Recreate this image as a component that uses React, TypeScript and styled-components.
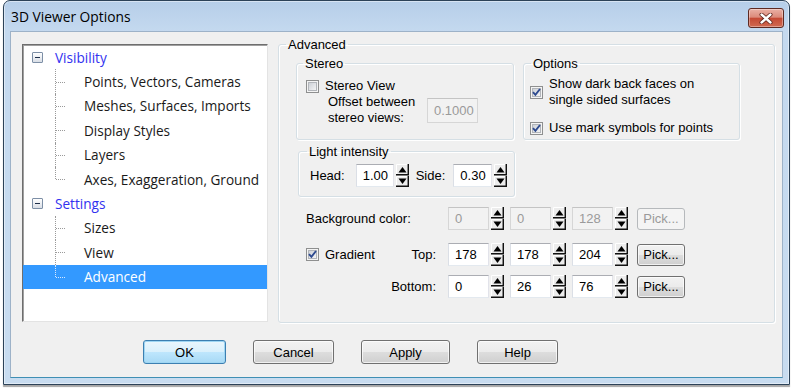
import React from "react";
import styled, { createGlobalStyle } from "styled-components";

const SANS = `"Liberation Sans", Arial, sans-serif`;
const UI = `"Open Sans", "Segoe UI", sans-serif`;

const GlobalStyle = createGlobalStyle`
  html, body {
    margin: 0;
    padding: 0;
    background: #ffffff;
  }
  body {
    width: 794px;
    height: 388px;
    overflow: hidden;
  }
`;

const Screen = styled.div`
  width: 794px;
  height: 388px;
  padding-left: 3px;
  box-sizing: border-box;
`;

const Window = styled.div`
  width: 787px;
  height: 385px;
  box-sizing: border-box;
  display: flex;
  flex-direction: column;
  border: 1px solid #2c4258;
  border-radius: 7px 7px 0 0;
  background: linear-gradient(#b6cee9 0px, #c4d9ef 30px, #c8dcf0 100%);
  box-shadow: inset 0 0 0 1px rgba(255, 255, 255, 0.45), 0 2px 1px rgba(0, 0, 0, 0.35);
`;

const TitleBar = styled.div`
  height: 30px;
  flex-shrink: 0;
  display: flex;
  align-items: center;
  padding-left: 7px;
  font-family: ${UI};
  font-size: 13.8px;
  color: #000;
`;

const CloseButton = styled.div`
  width: 36px;
  height: 20px;
  box-sizing: border-box;
  margin: 7px 5px 0 auto;
  align-self: flex-start;
  display: flex;
  align-items: center;
  justify-content: center;
  border: 1px solid #5e2a22;
  border-radius: 3px;
  background: linear-gradient(#eab0a5 0%, #dc8b7b 45%, #c54a35 52%, #d06a51 100%);
  box-shadow: inset 0 0 0 1px rgba(255, 255, 255, 0.35);
`;

const Client = styled.div`
  flex: 1;
  margin: 0 6px 6px;
  background: #f0f0f0;
  border: 1px solid #9db2c8;
  border-bottom-color: #3f8fb4;
  display: flex;
  flex-direction: column;
`;

const TopRow = styled.div`
  display: flex;
  align-items: flex-start;
  padding: 5px 0 0 11px;
`;

/* ---------- tree ---------- */

const Tree = styled.div`
  width: 246px;
  height: 278px;
  margin-top: 7px;
  box-sizing: border-box;
  background: #fff;
  border: 1px solid;
  border-color: #6e6e6e #e3e3e3 #e3e3e3 #6e6e6e;
  box-shadow: inset 1px 1px 0 #a0a0a0;
  font-family: ${UI};
  font-size: 13.6px;
`;

const TreeRow = styled.div<{ $selected?: boolean; $parent?: boolean }>`
  height: 24.4px;
  display: flex;
  align-items: center;
  padding-left: ${(p) => (p.$parent ? 9 : 32)}px;
  background: ${(p) => (p.$selected ? "#3399ff" : "transparent")};
  color: ${(p) => (p.$selected ? "#fff" : p.$parent ? "#3232f0" : "#1a1a1a")};
  white-space: nowrap;
`;

const Expander = styled.span`
  width: 11px;
  height: 11px;
  box-sizing: border-box;
  margin-right: 12px;
  border: 1px solid #7d8fa6;
  border-radius: 1px;
  background: linear-gradient(#ffffff, #d9dee6);
  display: flex;
  align-items: center;
  justify-content: center;
  &::after {
    content: "";
    width: 5px;
    height: 1px;
    background: #1e2f4a;
  }
`;

const Connector = styled.span<{ $last?: boolean; $selected?: boolean }>`
  width: 10px;
  align-self: stretch;
  position: relative;
  margin-right: 19px;
  &::before {
    content: "";
    position: absolute;
    left: 0;
    top: 0;
    height: ${(p) => (p.$last ? "50%" : "100%")};
    border-left: 1px dotted ${(p) => (p.$selected ? "#d6e8ff" : "#9a9a9a")};
  }
  &::after {
    content: "";
    position: absolute;
    left: 1px;
    top: 50%;
    width: 9px;
    border-top: 1px dotted ${(p) => (p.$selected ? "#d6e8ff" : "#9a9a9a")};
  }
`;

/* ---------- group boxes ---------- */

const Group = styled.fieldset<{ $w: number; $h: number; $ml?: number; $mt?: number }>`
  margin: ${(p) => p.$mt ?? 0}px 0 0 ${(p) => p.$ml ?? 0}px;
  padding: 0;
  min-width: 0;
  width: ${(p) => p.$w}px;
  height: ${(p) => p.$h}px;
  box-sizing: border-box;
  border: 1px solid #d5dfe5;
  border-radius: 3px;
  box-shadow: inset 1px 1px 0 #fff, 1px 1px 0 #fff;
  font-family: ${SANS};
  font-size: 13px;
  color: #000;
`;

const Legend = styled.legend<{ $ml?: number }>`
  margin-left: ${(p) => p.$ml ?? 7}px;
  padding: 0 2px;
  line-height: 15px;
  font-family: ${SANS};
  font-size: 13px;
`;

const AdvancedBody = styled.div`
  padding: 4px 0 0 17px;
`;

const GroupRow = styled.div`
  display: flex;
`;

const StereoBody = styled.div`
  padding: 7px 0 0 9px;
`;

const OptionsBody = styled.div`
  padding: 5px 0 0 6px;
`;

const CheckRow = styled.label<{ $mt?: number }>`
  display: flex;
  align-items: center;
  gap: 6px;
  margin-top: ${(p) => p.$mt ?? 0}px;
  line-height: 16px;
`;

const OffsetRow = styled.div`
  display: flex;
  align-items: center;
  margin-top: 0;
  padding-left: 22px;
`;

const OffsetLabel = styled.div`
  width: 99px;
  line-height: 16px;
`;

const TextBox = styled.div<{ $w: number; $h?: number; $disabled?: boolean }>`
  width: ${(p) => p.$w}px;
  height: ${(p) => p.$h ?? 23}px;
  box-sizing: border-box;
  display: flex;
  align-items: center;
  padding-left: 6px;
  border: 1px solid;
  border-color: ${(p) =>
    p.$disabled ? "#c4c4c4 #d6d6d6 #d6d6d6 #d6d6d6" : "#abadb3 #e2e3ea #e3e9ef #dbdfe6"};
  background: ${(p) => (p.$disabled ? "#f2f2f2" : "#fff")};
  color: ${(p) => (p.$disabled ? "#9a9a9a" : "#000")};
  font-family: ${SANS};
  font-size: 13px;
`;

const LightBody = styled.div`
  display: flex;
  align-items: center;
  padding: 5px 0 0 11px;
`;

const Caption = styled.span<{ $ml?: number; $mr?: number }>`
  margin-left: ${(p) => p.$ml ?? 0}px;
  margin-right: ${(p) => p.$mr ?? 0}px;
`;

const SpinWrap = styled.div<{ $mr?: number }>`
  display: flex;
  align-items: center;
  gap: 2px;
  margin-right: ${(p) => p.$mr ?? 0}px;
`;

/* ---------- colour rows ---------- */

const ColorRow = styled.div<{ $mt: number }>`
  display: flex;
  align-items: center;
  height: 23px;
  margin-top: ${(p) => p.$mt}px;
  padding-left: 10px;
  font-family: ${SANS};
  font-size: 13px;
`;

const RowLabel = styled.div<{ $align?: string }>`
  width: 142px;
  box-sizing: border-box;
  padding-right: 12px;
  display: flex;
  align-items: center;
  justify-content: ${(p) => p.$align ?? "flex-start"};
`;

const PickButton = styled.div<{ $disabled?: boolean }>`
  width: 48px;
  height: 22px;
  box-sizing: border-box;
  margin-left: 3px;
  display: flex;
  align-items: center;
  justify-content: center;
  border: 1px solid ${(p) => (p.$disabled ? "#b6b9bc" : "#707070")};
  border-radius: 3px;
  background: ${(p) =>
    p.$disabled ? "#f4f4f4" : "linear-gradient(#f2f2f2 0%, #ebebeb 50%, #dddddd 51%, #cfcfcf 100%)"};
  color: ${(p) => (p.$disabled ? "#9a9a9a" : "#000")};
  box-shadow: ${(p) => (p.$disabled ? "none" : "inset 0 0 0 1px rgba(255,255,255,0.7)")};
`;

/* ---------- dialog buttons ---------- */

const ButtonRow = styled.div`
  display: flex;
  gap: 27px;
  margin-top: 17px;
  padding-left: 132px;
`;

const DialogButton = styled.div<{ $w: number; $default?: boolean }>`
  width: ${(p) => p.$w}px;
  height: 24px;
  box-sizing: border-box;
  display: flex;
  align-items: center;
  justify-content: center;
  border: 1px solid ${(p) => (p.$default ? "#3c7fb1" : "#707070")};
  border-radius: 3px;
  background: ${(p) =>
    p.$default
      ? "linear-gradient(#eaf6fd 0%, #d9f0fc 50%, #bee6fd 51%, #a7d9f5 100%)"
      : "linear-gradient(#f2f2f2 0%, #ebebeb 50%, #dddddd 51%, #cfcfcf 100%)"};
  box-shadow: ${(p) =>
    p.$default ? "inset 0 0 0 1px #9fd6f3" : "inset 0 0 0 1px rgba(255,255,255,0.7)"};
  font-family: ${SANS};
  font-size: 13px;
  color: #000;
`;

/* ---------- small drawn parts ---------- */

const CheckBox = ({ checked }: { checked?: boolean }) => (
  <svg width="13" height="13" viewBox="0 0 13 13" style={{ flexShrink: 0 }}>
    <defs>
      <linearGradient id="cbfill" x1="0" y1="0" x2="1" y2="1">
        <stop offset="0" stopColor="#cbcfd5" />
        <stop offset="1" stopColor="#f6f6f6" />
      </linearGradient>
    </defs>
    <rect x="0.5" y="0.5" width="12" height="12" fill="#f4f4f4" stroke="#8e8f8f" />
    <rect x="2.5" y="2.5" width="8" height="8" fill="url(#cbfill)" stroke="#b2b5ba" />
    {checked && (
      <path d="M3 6.2 L5.4 8.8 L10 3" fill="none" stroke="#2d4a8f" strokeWidth="1.9" />
    )}
  </svg>
);

const Spinner = () => (
  <svg width="13" height="23" viewBox="0 0 13 23" style={{ flexShrink: 0 }}>
    <rect x="0" y="0" width="13" height="23" fill="#ececec" />
    <path d="M0.5 11 V0.5 H12" fill="none" stroke="#fff" />
    <path d="M12.3 0 V10.8 H0" fill="none" stroke="#111" strokeWidth="1.5" />
    <path d="M0.5 22 V12.5 H12" fill="none" stroke="#fff" />
    <path d="M12.3 12 V22.3 H0" fill="none" stroke="#111" strokeWidth="1.5" />
    <path d="M2.5 8.5 L6.5 3 L10.5 8.5 Z" fill="#000" />
    <path d="M2.5 14.5 L10.5 14.5 L6.5 20 Z" fill="#000" />
  </svg>
);

const CloseGlyph = () => (
  <svg width="14" height="11" viewBox="0 0 14 11">
    <path d="M2.5 1.5 L11.5 9.5 M11.5 1.5 L2.5 9.5" stroke="#5a1f17" strokeWidth="4" strokeLinecap="round" />
    <path d="M2.5 1.5 L11.5 9.5 M11.5 1.5 L2.5 9.5" stroke="#fff" strokeWidth="2.4" strokeLinecap="round" />
  </svg>
);

const SpinBox = ({
  value,
  width,
  disabled,
  mr,
}: {
  value: string;
  width: number;
  disabled?: boolean;
  mr?: number;
}) => (
  <SpinWrap $mr={mr}>
    <TextBox $w={width} $disabled={disabled}>
      {value}
    </TextBox>
    <Spinner />
  </SpinWrap>
);

const RgbInputs = ({ values, disabled }: { values: string[]; disabled?: boolean }) => (
  <>
    {values.map((v, i) => (
      <SpinBox key={i} value={v} width={41} disabled={disabled} mr={6} />
    ))}
    <PickButton $disabled={disabled}>Pick...</PickButton>
  </>
);

const treeItems = [
  { label: "Visibility", parent: true },
  { label: "Points, Vectors, Cameras" },
  { label: "Meshes, Surfaces, Imports" },
  { label: "Display Styles" },
  { label: "Layers" },
  { label: "Axes, Exaggeration, Ground", last: true },
  { label: "Settings", parent: true },
  { label: "Sizes" },
  { label: "View" },
  { label: "Advanced", last: true, selected: true },
];

export default function App() {
  return (
    <Screen>
      <GlobalStyle />
      <Window>
        <TitleBar>
          3D Viewer Options
          <CloseButton>
            <CloseGlyph />
          </CloseButton>
        </TitleBar>
        <Client>
          <TopRow>
            <Tree>
              {treeItems.map((item) => (
                <TreeRow key={item.label} $parent={item.parent} $selected={item.selected}>
                  {item.parent ? (
                    <Expander />
                  ) : (
                    <Connector $last={item.last} $selected={item.selected} />
                  )}
                  {item.label}
                </TreeRow>
              ))}
            </Tree>

            <Group $w={497} $h={286} $ml={10}>
              <Legend>Advanced</Legend>
              <AdvancedBody>
                <GroupRow>
                  <Group $w={218} $h={84}>
                    <Legend $ml={6}>Stereo</Legend>
                    <StereoBody>
                      <CheckRow>
                        <CheckBox />
                        Stereo View
                      </CheckRow>
                      <OffsetRow>
                        <OffsetLabel>
                          Offset between
                          <br />
                          stereo views:
                        </OffsetLabel>
                        <TextBox $w={51} $h={25} $disabled>
                          0.1000
                        </TextBox>
                      </OffsetRow>
                    </StereoBody>
                  </Group>

                  <Group $w={217} $h={84} $ml={9}>
                    <Legend>Options</Legend>
                    <OptionsBody>
                      <CheckRow>
                        <CheckBox checked />
                        <span>
                          Show dark back faces on
                          <br />
                          single sided surfaces
                        </span>
                      </CheckRow>
                      <CheckRow $mt={12}>
                        <CheckBox checked />
                        Use mark symbols for points
                      </CheckRow>
                    </OptionsBody>
                  </Group>
                </GroupRow>

                <Group $w={217} $h={53} $ml={2} $mt={4}>
                  <Legend $ml={8}>Light intensity</Legend>
                  <LightBody>
                    <Caption $mr={11}>Head:</Caption>
                    <SpinBox value="1.00" width={38} />
                    <Caption $ml={7} $mr={8}>
                      Side:
                    </Caption>
                    <SpinBox value="0.30" width={39} />
                  </LightBody>
                </Group>

                <ColorRow $mt={10}>
                  <RowLabel>Background color:</RowLabel>
                  <RgbInputs values={["0", "0", "128"]} disabled />
                </ColorRow>

                <ColorRow $mt={13}>
                  <RowLabel $align="space-between">
                    <CheckRow>
                      <CheckBox checked />
                      Gradient
                    </CheckRow>
                    <span>Top:</span>
                  </RowLabel>
                  <RgbInputs values={["178", "178", "204"]} />
                </ColorRow>

                <ColorRow $mt={9}>
                  <RowLabel $align="flex-end">Bottom:</RowLabel>
                  <RgbInputs values={["0", "26", "76"]} />
                </ColorRow>
              </AdvancedBody>
            </Group>
          </TopRow>

          <ButtonRow>
            <DialogButton $w={83} $default>
              OK
            </DialogButton>
            <DialogButton $w={81}>Cancel</DialogButton>
            <DialogButton $w={89}>Apply</DialogButton>
            <DialogButton $w={81}>Help</DialogButton>
          </ButtonRow>
        </Client>
      </Window>
    </Screen>
  );
}
